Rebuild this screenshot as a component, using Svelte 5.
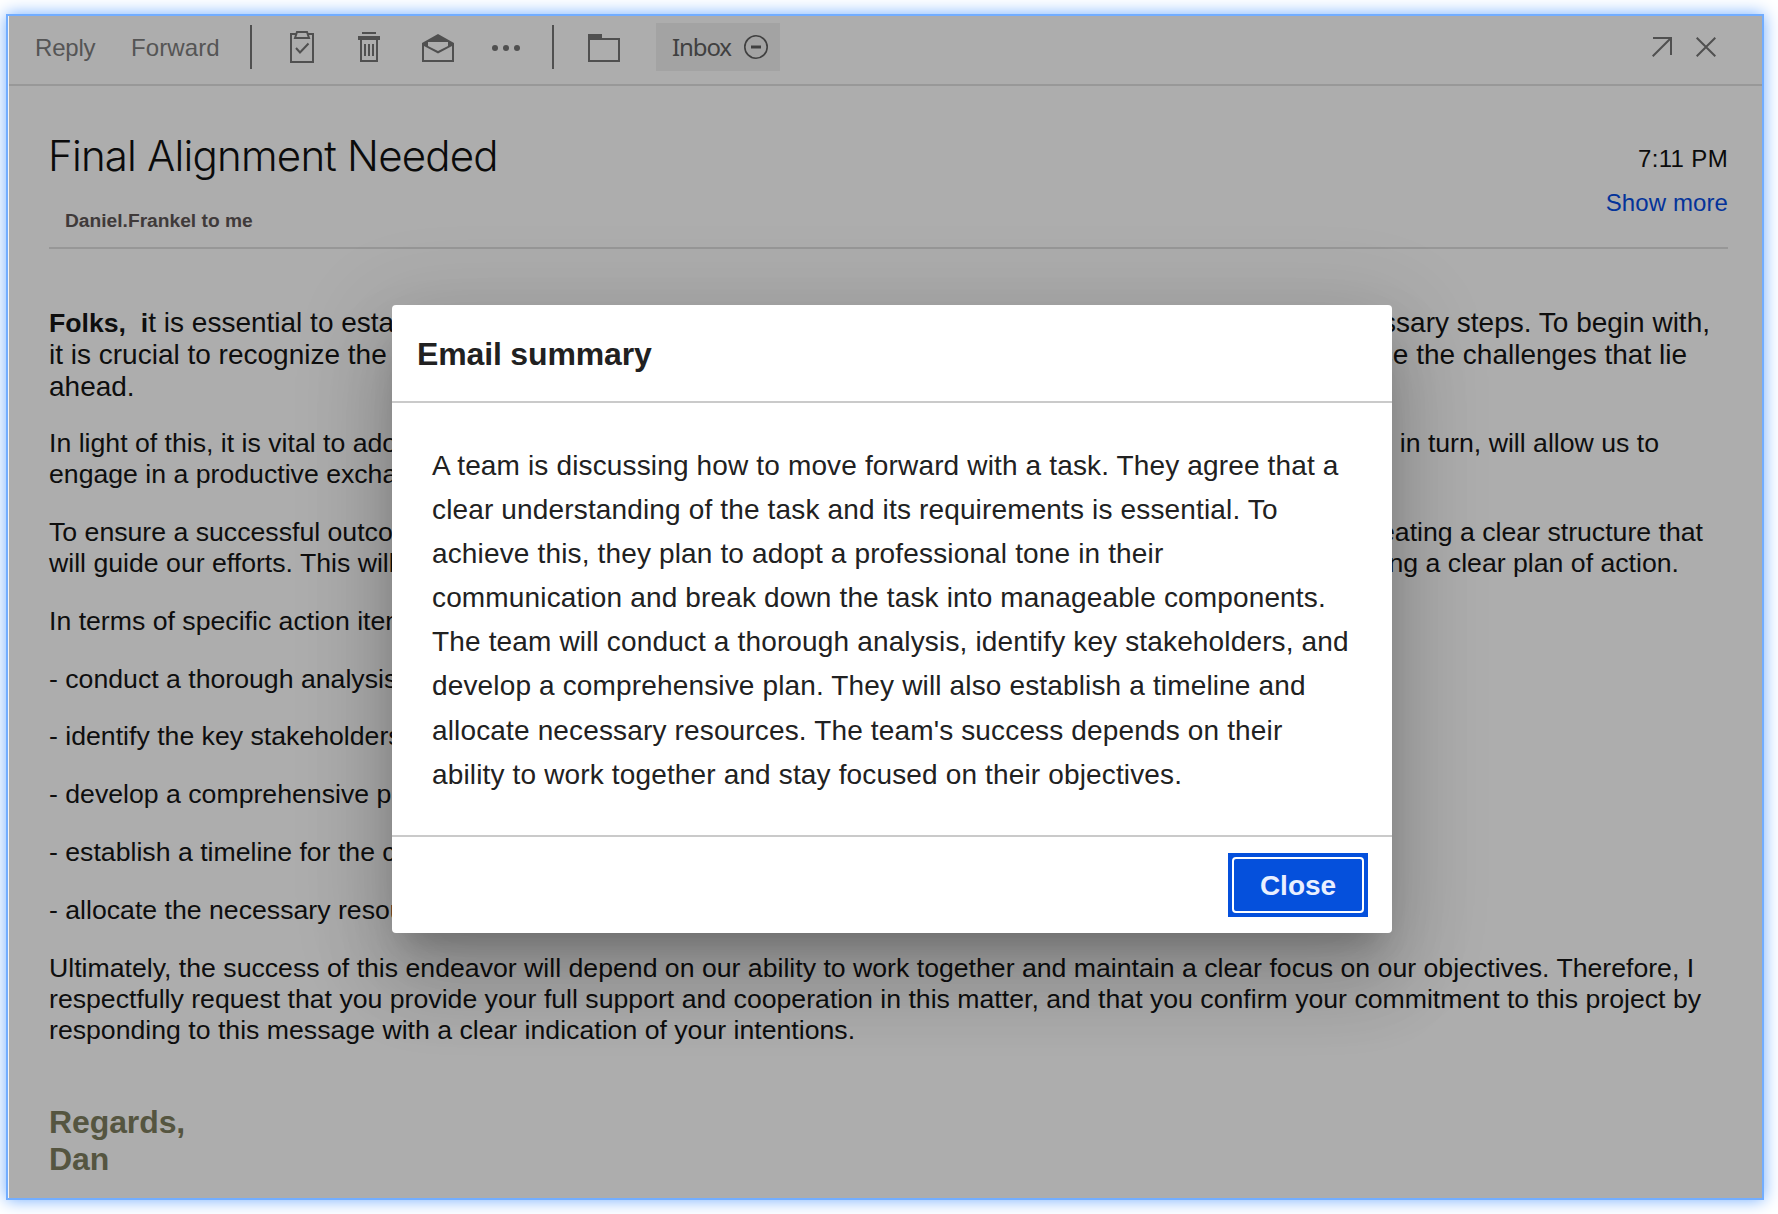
<script>
  const paragraphs = [
    {
      cls: 'lead',
      lines: [
        { bold: 'Folks,\u00a0 i', left: 't is essential to establish', right: 'necessary steps. To begin with,', end: 18 },
        { left: 'it is crucial to recognize the', right: 'face the challenges that lie', end: 41 },
        { left: 'ahead.' },
      ],
    },
    {
      lines: [
        { left: 'In light of this, it is vital to adopt', right: 'in turn, will allow us to', end: 69 },
        { left: 'engage in a productive exchange' },
      ],
    },
    {
      lines: [
        { left: 'To ensure a successful outcome,', right: 'creating a clear structure that', end: 25 },
        { left: 'will guide our efforts. This will', right: 'creating a clear plan of action.', end: 49 },
      ],
    },
    { lines: [{ left: 'In terms of specific action items:' }] },
    { lines: [{ left: '- conduct a thorough analysis' }] },
    { lines: [{ left: '- identify the key stakeholders' }] },
    { lines: [{ left: '- develop a comprehensive plan' }] },
    { lines: [{ left: '- establish a timeline for the completion' }] },
    { lines: [{ left: '- allocate the necessary resources' }] },
    {
      lines: [
        { left: 'Ultimately, the success of this endeavor will depend on our ability to work together and maintain a clear focus on our objectives. Therefore, I' },
        { left: 'respectfully request that you provide your full support and cooperation in this matter, and that you confirm your commitment to this project by' },
        { left: 'responding to this message with a clear indication of your intentions.' },
      ],
    },
  ];

  const summary = [
    'A team is discussing how to move forward with a task. They agree that a',
    'clear understanding of the task and its requirements is essential. To',
    'achieve this, they plan to adopt a professional tone in their',
    'communication and break down the task into manageable components.',
    'The team will conduct a thorough analysis, identify key stakeholders, and',
    'develop a comprehensive plan. They will also establish a timeline and',
    "allocate necessary resources. The team's success depends on their",
    'ability to work together and stay focused on their objectives.',
  ];
</script>

<div class="page">
  <main class="window">
    <header class="toolbar">
      <button class="text reply">Reply</button>
      <button class="text forward">Forward</button>
      <i class="sep s1"></i>
      <svg class="clip" width="24" height="32" viewBox="0 0 24 32" fill="none" stroke="currentColor" stroke-width="2">
        <path d="M6 3H1V31H23V3H18" />
        <path d="M5 7L7 1H17L19 7Z" />
        <path d="M6 17L10 21.5L18.5 12.5" />
      </svg>
      <svg class="trash" width="22" height="30" viewBox="0 0 22 30" fill="none" stroke="currentColor" stroke-width="2">
        <path d="M4 1H18" />
        <path d="M0 6H22" stroke-width="4" />
        <path d="M3 7V29H19V7M7 12V24M11 12V24M15 12V24" />
      </svg>
      <svg class="mail" width="32" height="28" viewBox="0 0 32 28">
        <path fill="currentColor" fill-rule="evenodd" d="M0 9L16 0L32 9V28H0ZM2 12V26H30V12L16 19.5ZM6 8V12L16 17L26 12V8Z" />
      </svg>
      <svg class="dots" width="28" height="6" viewBox="0 0 28 6" fill="currentColor">
        <circle cx="3" cy="3" r="3" /><circle cx="14" cy="3" r="3" /><circle cx="25" cy="3" r="3" />
      </svg>
      <i class="sep s2"></i>
      <svg class="folder" width="32" height="28" viewBox="0 0 32 28">
        <path fill="currentColor" fill-rule="evenodd" d="M0 0H14V4H32V28H0ZM2 6V26H30V6Z" />
      </svg>
      <div class="chip">
        <span>Inbox</span>
        <svg width="24" height="24" viewBox="0 0 24 24" fill="none" stroke="currentColor">
          <circle cx="12" cy="12" r="11.2" stroke-width="1.6" />
          <path d="M7 12H17" stroke-width="3" />
        </svg>
      </div>
      <svg class="expand" width="20" height="20" viewBox="0 0 20 20" fill="none" stroke="currentColor" stroke-width="2">
        <path d="M1 1H19V18M19 1L.7 19.3" />
      </svg>
      <svg class="cross" width="20" height="20" viewBox="0 0 20 20" fill="none" stroke="currentColor" stroke-width="2">
        <path d="M.7.7L19.3 19.3M19.3.7L.7 19.3" />
      </svg>
    </header>

    <section class="head">
      <div>
        <h1>Final Alignment Needed</h1>
        <p class="from">Daniel.Frankel to me</p>
      </div>
      <div class="meta">
        <span class="time">7:11 PM</span>
        <span class="more">Show more</span>
      </div>
    </section>

    <article>
      {#each paragraphs as para}
        <div class="para {para.cls ?? ''}">
          {#each para.lines as line}
            <div class="line">
              <span>{#if line.bold}<b>{line.bold}</b>{/if}{line.left}</span>
              {#if line.right}<span style="margin-right: {line.end}px">{line.right}</span>{/if}
            </div>
          {/each}
        </div>
      {/each}
      <p class="sign">Regards,<br />Dan</p>
    </article>

    <div class="backdrop">
      <div class="dialog" role="dialog" aria-label="Email summary">
        <h2>Email summary</h2>
        <div class="content">
          {#each summary as line}<div>{line}</div>{/each}
        </div>
        <footer><button class="close"><span>Close</span></button></footer>
      </div>
    </div>
  </main>
</div>

<style>
  :global(body) { margin: 0; background: #fff; }
  :global(*) { box-sizing: border-box; }
  button { font: inherit; border: 0; padding: 0; background: none; color: inherit; }
  h1, h2, p { margin: 0; font-weight: 400; }
  svg, i { flex: none; display: block; }
  .page { width: 1778px; height: 1214px; padding: 14px 0 0 6px; overflow: hidden; }
  .window {
    position: relative;
    width: 1758px;
    height: 1186px;
    border: 2px solid #72adff;
    box-shadow: 0 0 16px #72adff;
    background: #adadad;
    font-family: "Liberation Sans", Arial, sans-serif;
    white-space: nowrap;
  }
  .window::before {
    content: "";
    position: absolute;
    inset: 0 auto 0 0;
    width: 1px;
    background: #f4f4f4;
  }
  .toolbar {
    display: flex;
    align-items: flex-start;
    height: 70px;
    margin-left: 1px;
    border-bottom: 2px solid #989898;
    color: #505050;
    font-size: 24px;
  }
  .text { line-height: 28px; margin-top: 18px; text-align: left; color: #555; }
  .reply { margin-left: 26px; width: 96px; letter-spacing: -0.2px; }
  .forward { width: 119px; letter-spacing: 0.1px; }
  .sep { width: 2px; height: 44px; margin-top: 9px; background: #505050; }
  .clip { margin: 15px 0 0 38px; }
  .trash { margin: 16px 0 0 44px; }
  .mail { margin: 18px 0 0 42px; }
  .dots { margin: 29px 0 0 38px; }
  .s2 { margin-left: 32px; }
  .folder { margin: 18px 0 0 34px; }
  .chip {
    display: flex;
    align-items: center;
    gap: 12px;
    width: 124px;
    height: 48px;
    margin: 7px 0 0 36px;
    padding-left: 16px;
    background: #a3a3a3;
    color: #404040;
    font-family: "Noto Sans", "Open Sans", sans-serif;
  }
  .chip span { width: 60px; padding-bottom: 2px; letter-spacing: -1.1px; }
  .expand { margin: 21px 24px 0 auto; }
  .cross { margin: 21px 46px 0 0; }
  .head {
    display: flex;
    justify-content: space-between;
    height: 163px;
    margin: 0 34px 0 41px;
    border-bottom: 2px solid #979797;
  }
  h1 {
    margin: 43px 0 0 -1px;
    font: 300 42px/54px Inter, "Liberation Sans", sans-serif;
    letter-spacing: -0.8px;
    color: #0b0b0b;
  }
  .from {
    margin: 26px 0 0 16px;
    font-size: 19.2px;
    font-weight: 700;
    line-height: 24px;
    color: #3f3a3a;
  }
  .meta {
    display: flex;
    flex-direction: column;
    align-items: flex-end;
    gap: 16px;
    padding-top: 59px;
    font-size: 24px;
    line-height: 28px;
    color: #0b0b0b;
  }
  .time { letter-spacing: 0.35px; }
  .more { letter-spacing: 0.1px; color: #04339a; }
  article { margin: 57.6px 34px 0 41px; font-size: 26.67px; color: #0e0e0e; }
  .para { line-height: 31px; margin-bottom: 26.8px; }
  .lead { font-size: 28px; line-height: 32px; margin-bottom: 25.6px; }
  .lead b { font-size: 26.67px; }
  .line { display: flex; justify-content: space-between; }
  .sign {
    margin-top: 58px;
    font-size: 32px;
    font-weight: 700;
    line-height: 37px;
    letter-spacing: -0.1px;
    color: #555540;
  }
  .backdrop {
    position: absolute;
    inset: 0;
    display: flex;
    align-items: flex-start;
    padding: 289px 0 0 384px;
  }
  .dialog {
    width: 1000px;
    height: 628px;
    border-radius: 4px;
    background: #fff;
    color: #212121;
    box-shadow: 0 22px 30px -14px rgba(0, 0, 0, .2), 0 48px 76px 6px rgba(0, 0, 0, .14), 0 18px 92px 16px rgba(0, 0, 0, .12);
  }
  h2 {
    height: 98px;
    padding: 31px 0 0 25px;
    border-bottom: 2px solid #cacaca;
    font-size: 32px;
    font-weight: 700;
    line-height: 37px;
    letter-spacing: -0.15px;
  }
  .content {
    height: 434px;
    padding: 41px 0 0 40px;
    border-bottom: 2px solid #cacaca;
    font-size: 28px;
    line-height: 44.1px;
    letter-spacing: 0.15px;
  }
  footer { display: flex; justify-content: flex-end; padding: 16px 24px 0 0; }
  .close { width: 140px; height: 64px; padding: 4px; background: #0550dc; }
  .close span {
    display: block;
    height: 56px;
    border: 2px solid #fff;
    border-radius: 4px;
    font-size: 28px;
    font-weight: 700;
    line-height: 53px;
    color: #e9efff;
  }
</style>
